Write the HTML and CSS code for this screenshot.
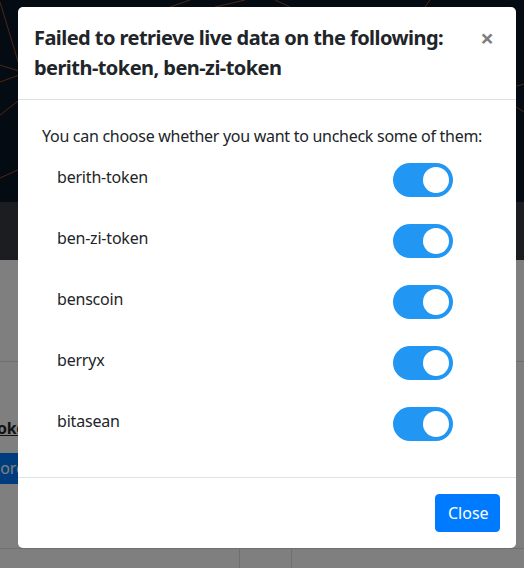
FILE: index.html
```html
<!DOCTYPE html>
<html>
<head>
<meta charset="utf-8">
<link rel="stylesheet" href="styles.css">
</head>
<body>
<div class="page">
  <div class="hero">
    <svg class="hero-art" width="524" height="202" viewBox="0 0 524 202">
      <g stroke="#c8622a" stroke-width="1" fill="none" opacity="0.75">
        <line x1="0" y1="2" x2="20" y2="68"/>
        <line x1="-10" y1="62" x2="22" y2="72"/>
        <line x1="0" y1="82" x2="22" y2="74"/>
        <line x1="0" y1="115" x2="22" y2="98"/>
        <line x1="0" y1="178" x2="22" y2="168"/>
        <line x1="170" y1="7" x2="190" y2="0"/>
        <line x1="215" y1="7" x2="245" y2="0"/>
        <line x1="275" y1="0" x2="290" y2="7"/>
        <line x1="425" y1="7" x2="430" y2="0"/>
        <line x1="510" y1="88" x2="524" y2="84"/>
        <line x1="505" y1="100" x2="524" y2="112"/>
      </g>
    </svg>
  </div>
  <div class="navbar"></div>
  <div class="content">
    <div class="section">
      <div class="card-head"></div>
      <div class="card-body">
        <a class="token-link">oken</a>
        <span class="more-btn">lore</span>
      </div>
    </div>
    <div class="table-row">
      <div class="cell c1"></div>
      <div class="cell c2"></div>
      <div class="cell c3"></div>
    </div>
  </div>
</div>
<div class="backdrop"></div>
<div class="modal">
  <div class="modal-header">
    <h5 class="modal-title">Failed to retrieve live data on the following: berith-token, ben-zi-token</h5>
    <span class="close">×</span>
  </div>
  <div class="modal-body">
    <p class="intro">You can choose whether you want to uncheck some of them:</p>
    <div class="rows">
      <div class="row"><span class="label">berith-token</span><span class="switch"><span class="knob"></span></span></div>
      <div class="row"><span class="label">ben-zi-token</span><span class="switch"><span class="knob"></span></span></div>
      <div class="row"><span class="label">benscoin</span><span class="switch"><span class="knob"></span></span></div>
      <div class="row"><span class="label">berryx</span><span class="switch"><span class="knob"></span></span></div>
      <div class="row"><span class="label">bitasean</span><span class="switch"><span class="knob"></span></span></div>
    </div>
  </div>
  <div class="modal-footer">
    <button class="btn">Close</button>
  </div>
</div>
</body>
</html>
```
FILE: styles.css
```css
* { box-sizing: border-box; }
html, body { margin: 0; padding: 0; }
body {
  width: 524px;
  height: 568px;
  overflow: hidden;
  font-family: "Noto Sans", "Open Sans", sans-serif;
  color: #212529;
  background: #fff;
  position: relative;
}
.page { display: flex; flex-direction: column; }
.hero { height: 202px; background: #0b1626; position: relative; overflow: hidden; }
.hero-art { display: block; }
.navbar { height: 58px; background: #363a40; }
.content { background: #fff; display: flex; flex-direction: column; }
.section { display: flex; flex-direction: column; }
.card-head { height: 102px; border-bottom: 1px solid #dcdfe3; }
.card-body { display: flex; flex-direction: column; align-items: flex-start; padding: 54px 0 0 0; height: 186px; }
.token-link {
  font-weight: 700; font-size: 16px; line-height: 24px; text-decoration: underline; color: #212529;
  margin-left: -3px; letter-spacing: -0.3px;
}
.more-btn {
  margin-top: 13px; margin-left: -4px; background: #007bff; color: #fff;
  font-size: 16px; padding: 4px 12px 4px 0; height: 31px; line-height: 23px; width: 60px;
}
.table-row { display: flex; border-top: 1px solid #dcdfe3; height: 40px; }
.cell { height: 100%; }
.c1 { width: 240px; border-right: 1px solid #dcdfe3; }
.c2 { width: 52px; border-right: 1px solid #dcdfe3; }
.c3 { flex: 1; }
.backdrop { position: absolute; inset: 0; background: rgba(0,0,0,0.5); }
.modal {
  position: absolute; left: 18px; top: 7px; width: 498px;
  background: #fff; border-radius: 5px;
  display: flex; flex-direction: column;
}
.modal-header {
  display: flex; justify-content: space-between; align-items: flex-start; gap: 20px;
  padding: 16px; border-bottom: 1px solid #dee2e6;
}
.modal-title {
  margin: 0; font-size: 20px; line-height: 30px; font-weight: 700; flex: 1;
  letter-spacing: -0.55px;
}
.close {
  font-size: 24px; font-weight: 700; color: #000; opacity: 0.5; line-height: 24px;
  margin: 3px 6px 0 0; font-family: "Noto Sans", sans-serif;
}
.modal-body { padding: 24px 16px 0 24px; height: 377px; }
.intro { margin: 0; font-size: 16px; line-height: 24px; letter-spacing: -0.28px; }
.rows { display: flex; flex-direction: column; gap: 27px; padding: 15px 47px 0 15px; }
.row { display: flex; justify-content: space-between; align-items: center; height: 34px; }
.label { font-size: 16px; line-height: 24px; margin-top: -7px; letter-spacing: -0.2px; }
.switch {
  width: 60px; height: 34px; border-radius: 17px; background: #2196f3;
  display: flex; align-items: center; justify-content: flex-end; padding: 4px;
}
.knob { width: 26px; height: 26px; border-radius: 50%; background: #fff; }
.modal-footer {
  display: flex; justify-content: flex-end; padding: 16px; border-top: 1px solid #dee2e6;
}
.btn {
  font-family: inherit; font-size: 16px; line-height: 24px; padding: 6px 12px;
  background: #007bff; color: #fff; border: 1px solid #007bff; border-radius: 4px;
  height: 38px; width: 65px;
}
```
